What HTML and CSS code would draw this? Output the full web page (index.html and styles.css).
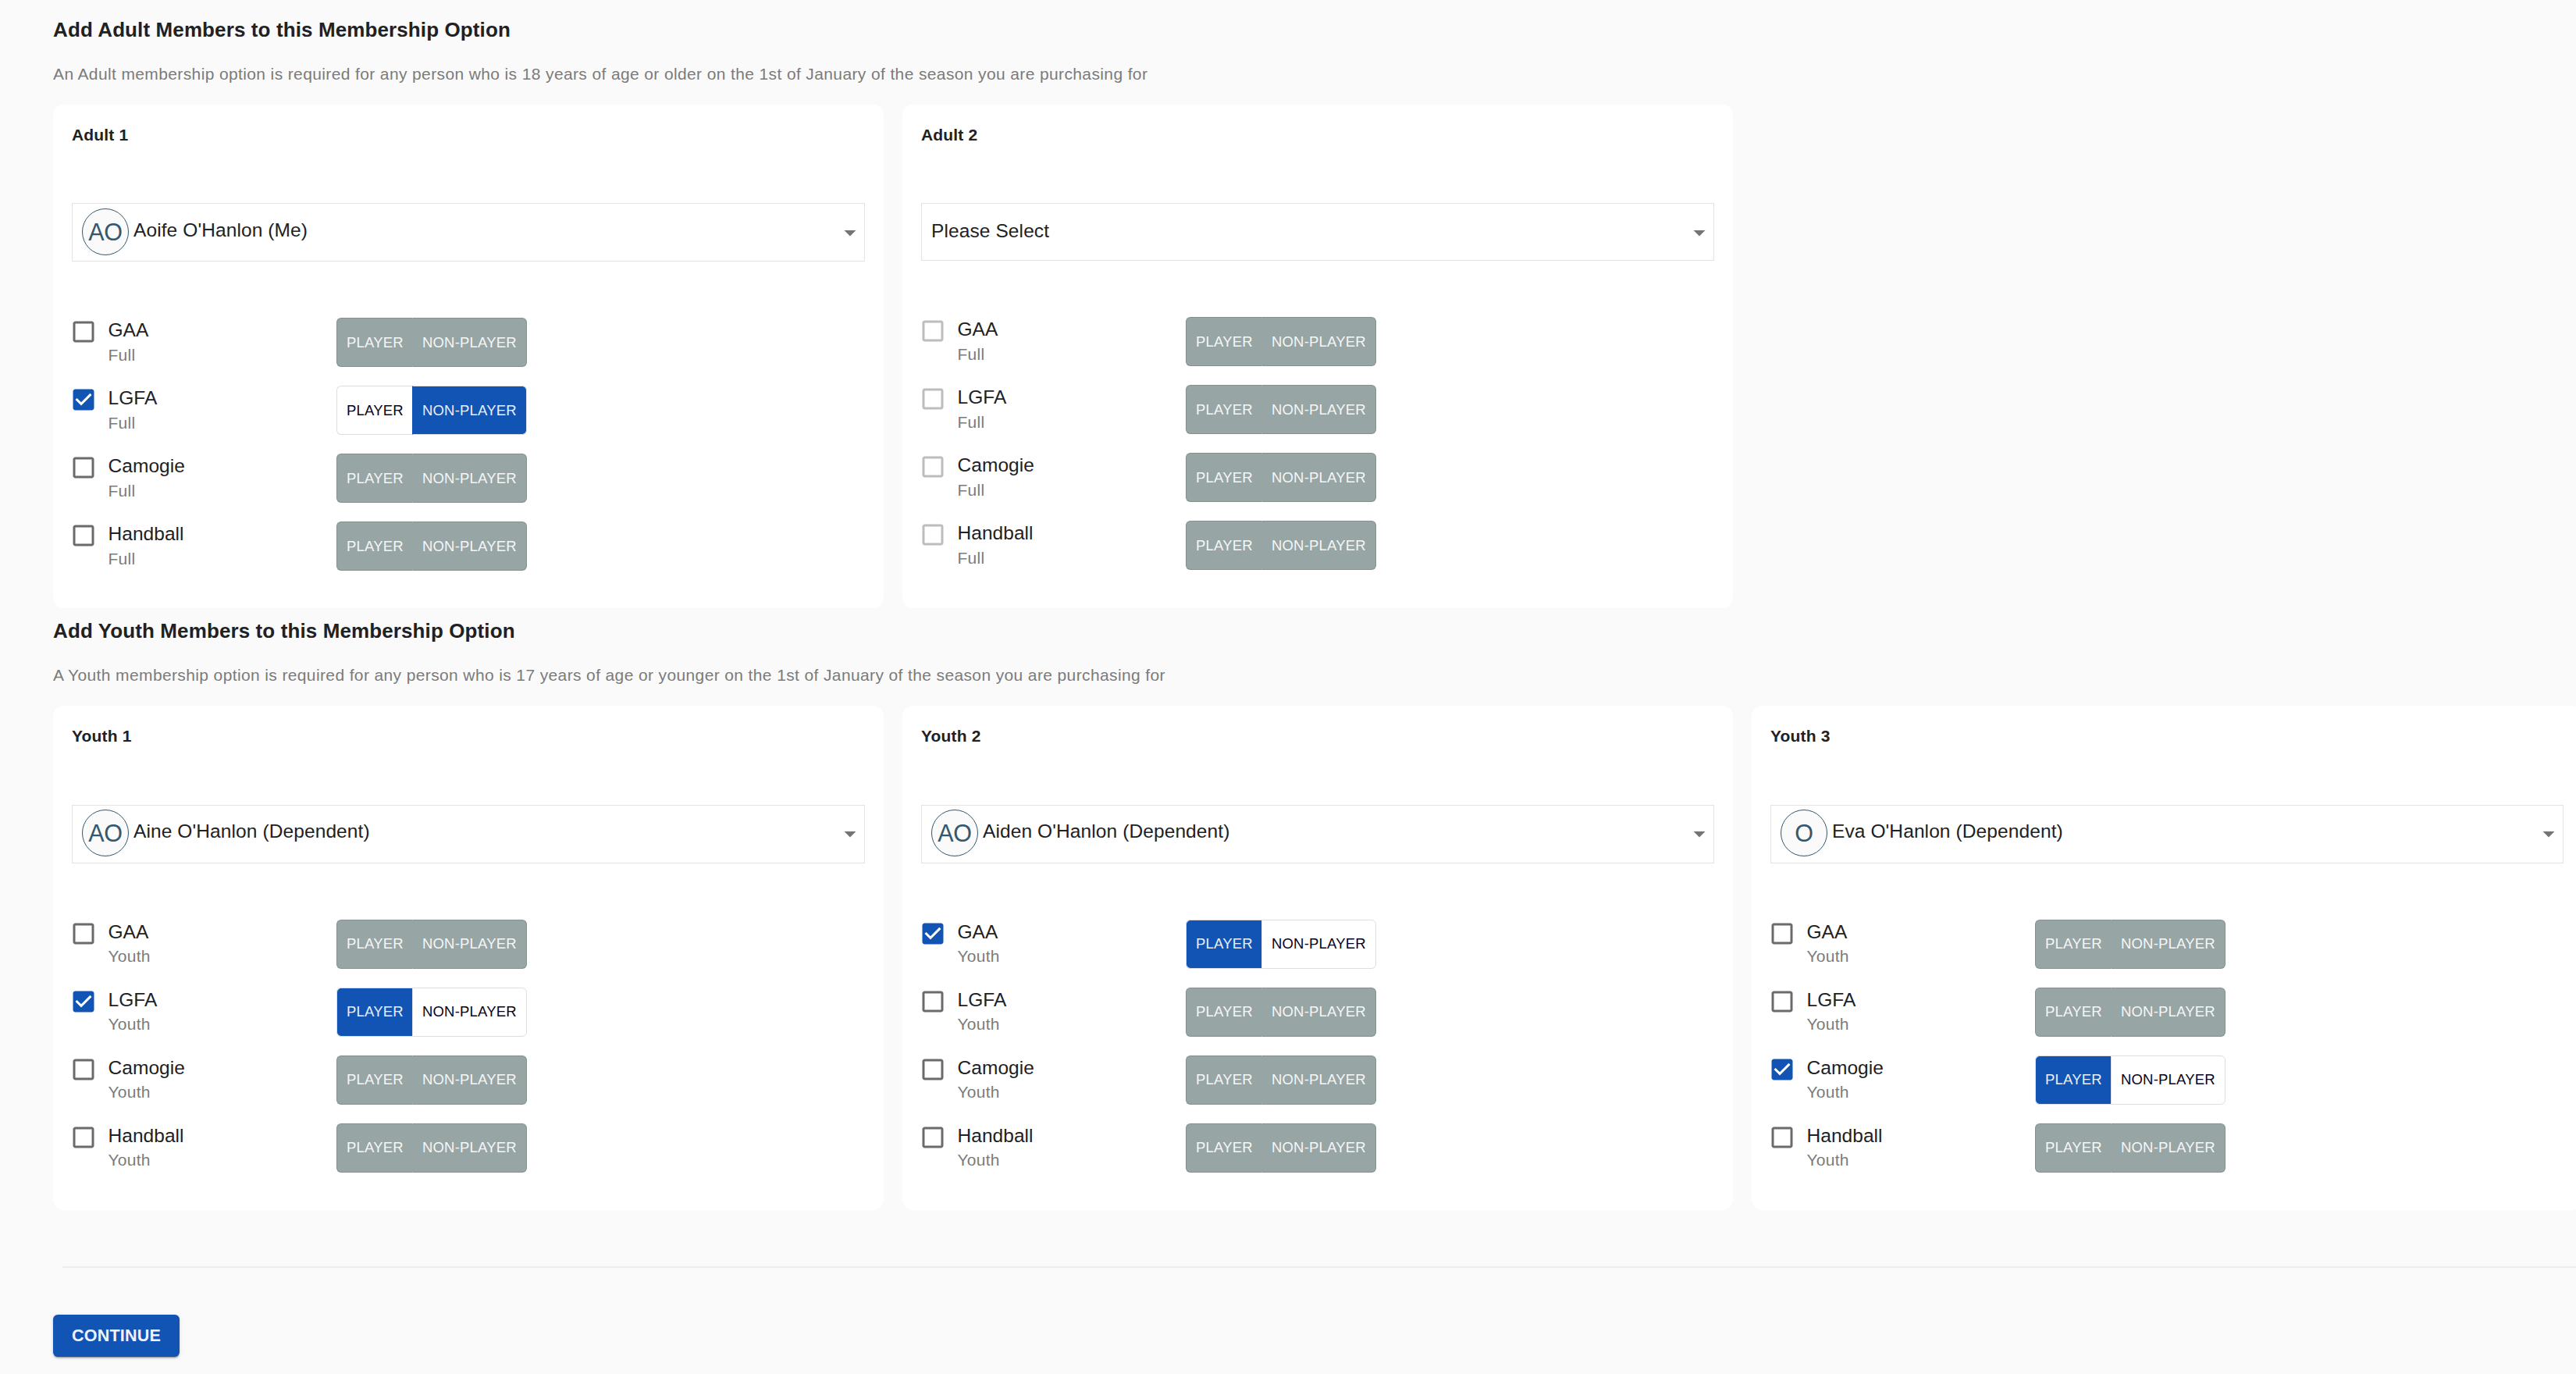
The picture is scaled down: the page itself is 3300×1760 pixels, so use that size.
FILE: index.html
```html
<!DOCTYPE html>
<html lang="en">
<head>
<meta charset="utf-8">
<title>Membership Options</title>
<link rel="stylesheet" href="styles.css">
</head>
<body>
<svg class="sprite" aria-hidden="true">
  <symbol id="box" viewBox="0 0 24 24"><path d="M19 5v14H5V5h14m0-2H5c-1.1 0-2 .9-2 2v14c0 1.1.9 2 2 2h14c1.1 0 2-.9 2-2V5c0-1.1-.9-2-2-2z"/></symbol>
  <symbol id="checked" viewBox="0 0 24 24"><path d="M19 3H5c-1.11 0-2 .9-2 2v14c0 1.1.89 2 2 2h14c1.11 0 2-.9 2-2V5c0-1.1-.89-2-2-2zm-9 14l-5-5 1.41-1.41L10 14.17l7.59-7.59L19 8l-9 9z"/></symbol>
  <symbol id="arrow" viewBox="0 0 24 24"><path d="M7 10l5 5 5-5z"/></symbol>
</svg>
<main class="page">
  <section class="group">
    <h2 class="heading">Add Adult Members to this Membership Option</h2>
    <p class="intro">An Adult membership option is required for any person who is 18 years of age or older on the 1st of January of the season you are purchasing for</p>
    <div class="cards">
      <article class="card">
        <h3 class="card-title">Adult 1</h3>
        <div class="select"><span class="avatar">AO</span><span class="name">Aoife O'Hanlon (Me)</span><svg class="arrow"><use href="#arrow"/></svg></div>
        <ul class="sports">
          <li class="sport"><svg class="check"><use href="#box"/></svg><div class="label"><b>GAA</b><small>Full</small></div><div class="toggle disabled"><span>PLAYER</span><span>NON-PLAYER</span></div></li>
          <li class="sport"><svg class="check on"><use href="#checked"/></svg><div class="label"><b>LGFA</b><small>Full</small></div><div class="toggle"><span>PLAYER</span><span class="selected">NON-PLAYER</span></div></li>
          <li class="sport"><svg class="check"><use href="#box"/></svg><div class="label"><b>Camogie</b><small>Full</small></div><div class="toggle disabled"><span>PLAYER</span><span>NON-PLAYER</span></div></li>
          <li class="sport"><svg class="check"><use href="#box"/></svg><div class="label"><b>Handball</b><small>Full</small></div><div class="toggle disabled"><span>PLAYER</span><span>NON-PLAYER</span></div></li>
        </ul>
      </article>
      <article class="card">
        <h3 class="card-title">Adult 2</h3>
        <div class="select empty"><span class="name">Please Select</span><svg class="arrow"><use href="#arrow"/></svg></div>
        <ul class="sports">
          <li class="sport"><svg class="check off"><use href="#box"/></svg><div class="label"><b>GAA</b><small>Full</small></div><div class="toggle disabled"><span>PLAYER</span><span>NON-PLAYER</span></div></li>
          <li class="sport"><svg class="check off"><use href="#box"/></svg><div class="label"><b>LGFA</b><small>Full</small></div><div class="toggle disabled"><span>PLAYER</span><span>NON-PLAYER</span></div></li>
          <li class="sport"><svg class="check off"><use href="#box"/></svg><div class="label"><b>Camogie</b><small>Full</small></div><div class="toggle disabled"><span>PLAYER</span><span>NON-PLAYER</span></div></li>
          <li class="sport"><svg class="check off"><use href="#box"/></svg><div class="label"><b>Handball</b><small>Full</small></div><div class="toggle disabled"><span>PLAYER</span><span>NON-PLAYER</span></div></li>
        </ul>
      </article>
    </div>
  </section>
  <section class="group youth">
    <h2 class="heading">Add Youth Members to this Membership Option</h2>
    <p class="intro">A Youth membership option is required for any person who is 17 years of age or younger on the 1st of January of the season you are purchasing for</p>
    <div class="cards">
      <article class="card">
        <h3 class="card-title">Youth 1</h3>
        <div class="select"><span class="avatar">AO</span><span class="name">Aine O'Hanlon (Dependent)</span><svg class="arrow"><use href="#arrow"/></svg></div>
        <ul class="sports">
          <li class="sport"><svg class="check"><use href="#box"/></svg><div class="label"><b>GAA</b><small>Youth</small></div><div class="toggle disabled"><span>PLAYER</span><span>NON-PLAYER</span></div></li>
          <li class="sport"><svg class="check on"><use href="#checked"/></svg><div class="label"><b>LGFA</b><small>Youth</small></div><div class="toggle"><span class="selected">PLAYER</span><span>NON-PLAYER</span></div></li>
          <li class="sport"><svg class="check"><use href="#box"/></svg><div class="label"><b>Camogie</b><small>Youth</small></div><div class="toggle disabled"><span>PLAYER</span><span>NON-PLAYER</span></div></li>
          <li class="sport"><svg class="check"><use href="#box"/></svg><div class="label"><b>Handball</b><small>Youth</small></div><div class="toggle disabled"><span>PLAYER</span><span>NON-PLAYER</span></div></li>
        </ul>
      </article>
      <article class="card">
        <h3 class="card-title">Youth 2</h3>
        <div class="select"><span class="avatar">AO</span><span class="name">Aiden O'Hanlon (Dependent)</span><svg class="arrow"><use href="#arrow"/></svg></div>
        <ul class="sports">
          <li class="sport"><svg class="check on"><use href="#checked"/></svg><div class="label"><b>GAA</b><small>Youth</small></div><div class="toggle"><span class="selected">PLAYER</span><span>NON-PLAYER</span></div></li>
          <li class="sport"><svg class="check"><use href="#box"/></svg><div class="label"><b>LGFA</b><small>Youth</small></div><div class="toggle disabled"><span>PLAYER</span><span>NON-PLAYER</span></div></li>
          <li class="sport"><svg class="check"><use href="#box"/></svg><div class="label"><b>Camogie</b><small>Youth</small></div><div class="toggle disabled"><span>PLAYER</span><span>NON-PLAYER</span></div></li>
          <li class="sport"><svg class="check"><use href="#box"/></svg><div class="label"><b>Handball</b><small>Youth</small></div><div class="toggle disabled"><span>PLAYER</span><span>NON-PLAYER</span></div></li>
        </ul>
      </article>
      <article class="card">
        <h3 class="card-title">Youth 3</h3>
        <div class="select"><span class="avatar">O</span><span class="name">Eva O'Hanlon (Dependent)</span><svg class="arrow"><use href="#arrow"/></svg></div>
        <ul class="sports">
          <li class="sport"><svg class="check"><use href="#box"/></svg><div class="label"><b>GAA</b><small>Youth</small></div><div class="toggle disabled"><span>PLAYER</span><span>NON-PLAYER</span></div></li>
          <li class="sport"><svg class="check"><use href="#box"/></svg><div class="label"><b>LGFA</b><small>Youth</small></div><div class="toggle disabled"><span>PLAYER</span><span>NON-PLAYER</span></div></li>
          <li class="sport"><svg class="check on"><use href="#checked"/></svg><div class="label"><b>Camogie</b><small>Youth</small></div><div class="toggle"><span class="selected">PLAYER</span><span>NON-PLAYER</span></div></li>
          <li class="sport"><svg class="check"><use href="#box"/></svg><div class="label"><b>Handball</b><small>Youth</small></div><div class="toggle disabled"><span>PLAYER</span><span>NON-PLAYER</span></div></li>
        </ul>
      </article>
    </div>
  </section>
  <hr class="divider">
  <button class="continue" type="button">CONTINUE</button>
</main>
</body>
</html>
```
FILE: styles.css
```css
* { box-sizing: border-box; margin: 0; padding: 0; }

body {
  background: #fafafa;
  color: #212121;
  font-family: "Liberation Sans", Arial, Helvetica, sans-serif;
  overflow: hidden;
}

.sprite { display: none; }

.page {
  height: 1760px;
  padding: 20px 0 0 68px;
  overflow: hidden;
}

.group { padding-bottom: 11px; }
.group.youth { padding-bottom: 0; }

.heading {
  font-size: 26px;
  font-weight: 700;
  line-height: 36px;
  letter-spacing: .11px;
}

.intro {
  margin: 24px 0;
  color: #7b7b7b;
  font-size: 21px;
  line-height: 30px;
  letter-spacing: .375px;
}

.cards {
  display: grid;
  grid-template-columns: repeat(3, 1064px);
  gap: 24px;
}

.card {
  padding: 24px 24px 48px;
  border-radius: 14px;
  background: #fff;
}

.card-title {
  font-size: 21px;
  font-weight: 700;
  line-height: 30px;
  letter-spacing: .15px;
}

.select {
  display: flex;
  align-items: center;
  height: 75px;
  margin: 72px 0;
  padding: 0 0 1px 12px;
  border: 1px solid #e3e3e3;
}

.youth .select { margin-top: 73px; padding-bottom: 3px; }

.select.empty { height: 74px; padding-bottom: 0; }

.avatar {
  display: flex;
  align-items: center;
  justify-content: center;
  width: 60px;
  height: 60px;
  margin-right: 6px;
  border: 1px solid #34586e;
  border-radius: 50%;
  background: #fafafa;
  color: #34586e;
  font-size: 30.5px;
  letter-spacing: -.3px;
}

.name {
  flex: 1;
  padding-bottom: 4px;
  font-size: 24.5px;
  line-height: 30px;
  letter-spacing: .1px;
}

.empty .name { padding-bottom: 3px; }

.arrow {
  width: 36px;
  height: 36px;
  margin-top: 2px;
  fill: #757575;
}

.sports {
  display: grid;
  gap: 24px;
  list-style: none;
}

.sport {
  display: grid;
  grid-template-columns: 46.5px 292.5px auto;
  justify-content: start;
  height: 63px;
}

.check {
  width: 36px;
  height: 36px;
  margin-left: -3px;
  fill: #6b6b6b;
}

.check.on { fill: #1254b4; }
.check.off { fill: #bdbdbd; }

.label b,
.label small { display: block; line-height: 32px; }

.label b {
  font-size: 24.5px;
  font-weight: 400;
  letter-spacing: .05px;
}

.label small {
  color: #7b7b7b;
  font-size: 21px;
  letter-spacing: .25px;
}

.youth .label small { margin-top: -1px; }

.toggle { display: flex; height: 63px; }

.toggle span {
  width: 97px;
  padding-left: 12px;
  border: 1px solid #dedede;
  border-right: 0;
  border-radius: 6px 0 0 6px;
  color: #07041c;
  font-size: 18.5px;
  line-height: 62px;
  letter-spacing: .18px;
  white-space: nowrap;
}

.youth .toggle span { line-height: 60px; }

.toggle span + span {
  width: 147px;
  border-right: 1px solid #dedede;
  border-radius: 0 6px 6px 0;
}

.toggle .selected { background: #1254b4; color: #e8eef8; }
.toggle span + .selected { border-left-color: #1254b4; }

.toggle.disabled span {
  border-color: #84928f;
  background: #97a5a5;
  color: #f4f6f6;
}

.toggle.disabled span + span { border-left-color: #97a5a5; }

.divider {
  height: 2px;
  margin: 72px 0 60px 12px;
  border: 0;
  background: #ededed;
}

.continue {
  display: block;
  width: 162px;
  height: 54px;
  border: 0;
  border-radius: 6px;
  background: #1254b4;
  box-shadow: 0 3px 1px -2px rgba(0, 0, 0, .2), 0 2px 2px rgba(0, 0, 0, .14), 0 1px 5px rgba(0, 0, 0, .12);
  color: #eef3fb;
  font: 700 21.5px/54px "Liberation Sans", Arial, sans-serif;
  letter-spacing: .2px;
}
```
